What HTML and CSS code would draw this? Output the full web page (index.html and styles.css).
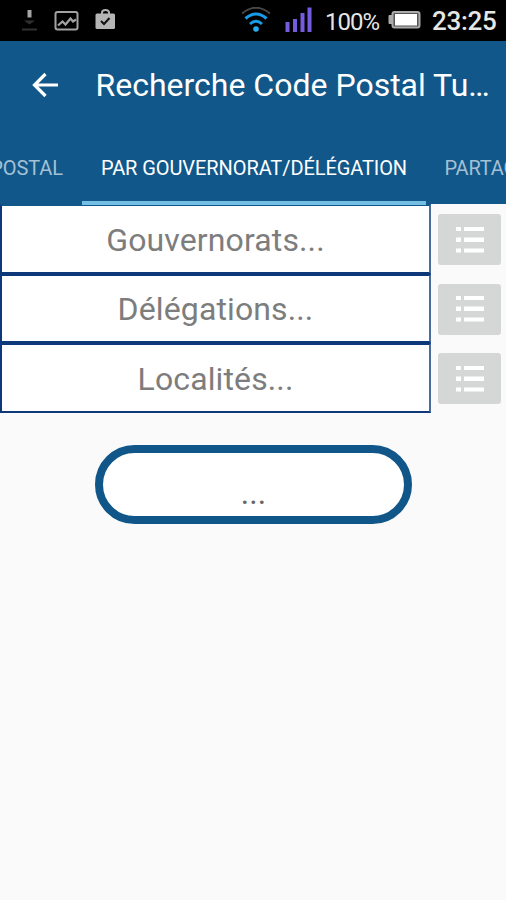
FILE: index.html
```html
<!DOCTYPE html>
<html lang="fr">

<head>
  <meta charset="UTF-8">
  <meta name="viewport" content="width=device-width, initial-scale=1.0">
  <title>Recherche Code Postal</title>
  <link rel="stylesheet" href="styles.css">
</head>

<body>
  <div class="status-bar">
    <svg class="download-icon" width="18" height="24" viewBox="0 0 18 24">
      <path d="M6.500 2h4v7.500h-4z" fill="#a5a5a5" />
      <path d="M3 12.500h11l-5.500 4z" fill="#303030" />
      <path d="M1 21.500h15" stroke="#303030" stroke-width="2" />
    </svg>
    <svg class="image-icon" width="26" height="22" viewBox="0 0 26 22">
      <rect x="1.500" y="2" width="22" height="17.500" rx="2" fill="none" stroke="#a3a3a3" stroke-width="2" />
      <path d="M4 15.500l4.500-4 3 3 5-6 2.500 3 3-2" fill="none" stroke="#a3a3a3" stroke-width="2.200" />
    </svg>
    <svg class="bag-icon" width="22" height="24" viewBox="0 0 22 24">
      <path d="M7 6V4.500q0-2.500 3.500-2.500t3.500 2.500V6" fill="none" stroke="#b0b0b0" stroke-width="2" />
      <rect x="0.500" y="5.500" width="19.500" height="15.500" rx="1.500" fill="#b5b5b5" />
      <path d="M6 13l3 3 5.500-6" fill="none" stroke="#111" stroke-width="2" />
    </svg>
    <svg class="wifi-icon" width="30" height="26" viewBox="0 0 30 26">
      <g fill="none" stroke-width="3">
        <path d="M1 6.500Q15-5 29 6.500" stroke="#484848" stroke-width="2" />
        <path d="M4.500 11.500Q15 2.500 25.500 11.500" stroke="#189ce8" />
        <path d="M9 17Q15 11.500 21 17" stroke="#189ce8" />
      </g>
      <circle cx="15" cy="22" r="2.800" fill="#27aaf0" />
    </svg>
    <svg class="signal-icon" width="28" height="26" viewBox="0 0 28 26">
      <path d="M0.500 15h4v10h-4zM8 12h4v13H8zM15.500 6h4v19h-4zM22.500 0.500h4V25h-4z" fill="#745be0" />
    </svg>
    <span class="percent">100%</span>
    <svg class="battery-icon" width="33" height="20" viewBox="0 0 33 20">
      <path d="M4 5.500H1v8h3" fill="#aaa" stroke="#aaa" />
      <rect x="4.500" y="2" width="27" height="15.500" rx="2" fill="#555" stroke="#aaa" stroke-width="2" />
      <rect x="7" y="4" width="22" height="11.500" fill="#fff" />
    </svg>
    <span class="clock">23:25</span>
  </div>

  <header class="app-bar">
    <svg class="back-icon" width="27" height="26" viewBox="0 0 27 26">
      <path d="M26 13H3M13.500 2L2.500 13l11 11" fill="none" stroke="#fff" stroke-width="3.200" />
    </svg>
    <h1>Recherche Code Postal Tu…</h1>
  </header>

  <nav class="tabs">
    <a class="tab tab-left"><span>POSTAL</span></a>
    <a class="tab active"><span>PAR GOUVERNORAT/DÉLÉGATION</span></a>
    <a class="tab tab-right"><span>PARTAGER</span></a>
  </nav>

  <main>
    <div class="row">
      <div class="field">Gouvernorats...</div>
      <button class="list-button" aria-label="Gouvernorats">
        <svg width="28" height="26" viewBox="0 0 28 26">
          <path d="M0 0h5v4H0zM8 0h20v4H8zM0 10.500h5v4.500H0zM8 10.500h20v4.500H8zM0 21.500h5v4H0zM8 21.500h20v4H8z" fill="#fff" />
        </svg>
      </button>
    </div>
    <div class="row">
      <div class="field">Délégations...</div>
      <button class="list-button" aria-label="Délégations">
        <svg width="28" height="26" viewBox="0 0 28 26">
          <path d="M0 0h5v4H0zM8 0h20v4H8zM0 10.500h5v4.500H0zM8 10.500h20v4.500H8zM0 21.500h5v4H0zM8 21.500h20v4H8z" fill="#fff" />
        </svg>
      </button>
    </div>
    <div class="row">
      <div class="field">Localités...</div>
      <button class="list-button" aria-label="Localités">
        <svg width="28" height="26" viewBox="0 0 28 26">
          <path d="M0 0h5v4H0zM8 0h20v4H8zM0 10.500h5v4.500H0zM8 10.500h20v4.500H8zM0 21.500h5v4H0zM8 21.500h20v4H8z" fill="#fff" />
        </svg>
      </button>
    </div>
    <div class="result">...</div>
  </main>
</body>

</html>
```
FILE: styles.css
```css
* {
  box-sizing: border-box;
}

body {
  margin: 0;
  height: 900px;
  overflow: hidden;
  background: #fafafa;
  font-family: Roboto, sans-serif;
}

svg {
  display: block;
  flex-shrink: 0;
}

.status-bar {
  display: flex;
  align-items: flex-start;
  height: 41px;
  background: #000;
  color: #e6e6e6;
  white-space: nowrap;
}

.download-icon {
  margin: 8px 0 0 21px;
}

.image-icon {
  margin: 10px 0 0 15px;
}

.bag-icon {
  margin: 8px 0 0 15px;
}

.wifi-icon {
  margin: 7px 0 0 124px;
}

.signal-icon {
  margin: 7px 0 0 14px;
}

.percent {
  width: 54px;
  margin: 7px 0 0 12px;
  font-size: 24px;
  line-height: 30px;
  letter-spacing: -1px;
}

.battery-icon {
  margin: 10px 0 0 9px;
}

.clock {
  margin: 6px 0 0 11px;
  font-size: 26px;
  line-height: 30px;
  font-weight: 500;
  letter-spacing: -0.3px;
}

.app-bar {
  display: flex;
  align-items: center;
  height: 89px;
  padding: 0 0 2px 32px;
  background: #115789;
}

h1 {
  margin: 0 0 0 36.5px;
  color: #fff;
  font-size: 32px;
  line-height: 40px;
  font-weight: 400;
  white-space: nowrap;
}

.tabs {
  display: flex;
  height: 74px;
  background: #115789;
}

.tab {
  display: flex;
  align-items: center;
  flex-shrink: 0;
  height: 75px;
  color: #a4c0d4;
  font-size: 20px;
  letter-spacing: -0.08px;
  white-space: nowrap;
}

.tab-left {
  justify-content: flex-end;
  width: 82px;
  padding-right: 19px;
}

/* the indicator runs over the top edge of the first field */
.tab.active {
  position: relative;
  justify-content: center;
  width: 344px;
  color: #fff;
  border-bottom: 4px solid #73bfe3;
  padding-top: 4px;
}

.tab-right {
  padding-left: 18.5px;
  letter-spacing: -0.2px;
}

.row {
  display: flex;
  height: 69.5px;
}

.field {
  display: flex;
  align-items: center;
  justify-content: center;
  width: 431px;
  padding-top: 2px;
  border: 2px solid #0d397a;
  border-right-color: #4a6d9c;
  background: #fff;
  color: #7d7d7d;
  font-size: 32px;
  letter-spacing: 0.12px;
}

.row:first-child .field {
  border-top-color: #115789;
}

.list-button {
  display: flex;
  align-items: center;
  justify-content: center;
  width: 63px;
  height: 51px;
  margin: 10px 0 0 6.5px;
  padding: 0 0 0 2px;
  border: 0;
  border-radius: 3px;
  background: #d5d7d6;
}

.result {
  width: 317px;
  height: 79px;
  margin: 32px 0 0 95px;
  padding: 20px 0 0;
  border: 8px solid #105689;
  border-radius: 40px;
  background: #fff;
  color: #666;
  font-size: 32px;
  line-height: 40px;
  text-align: center;
}
```
